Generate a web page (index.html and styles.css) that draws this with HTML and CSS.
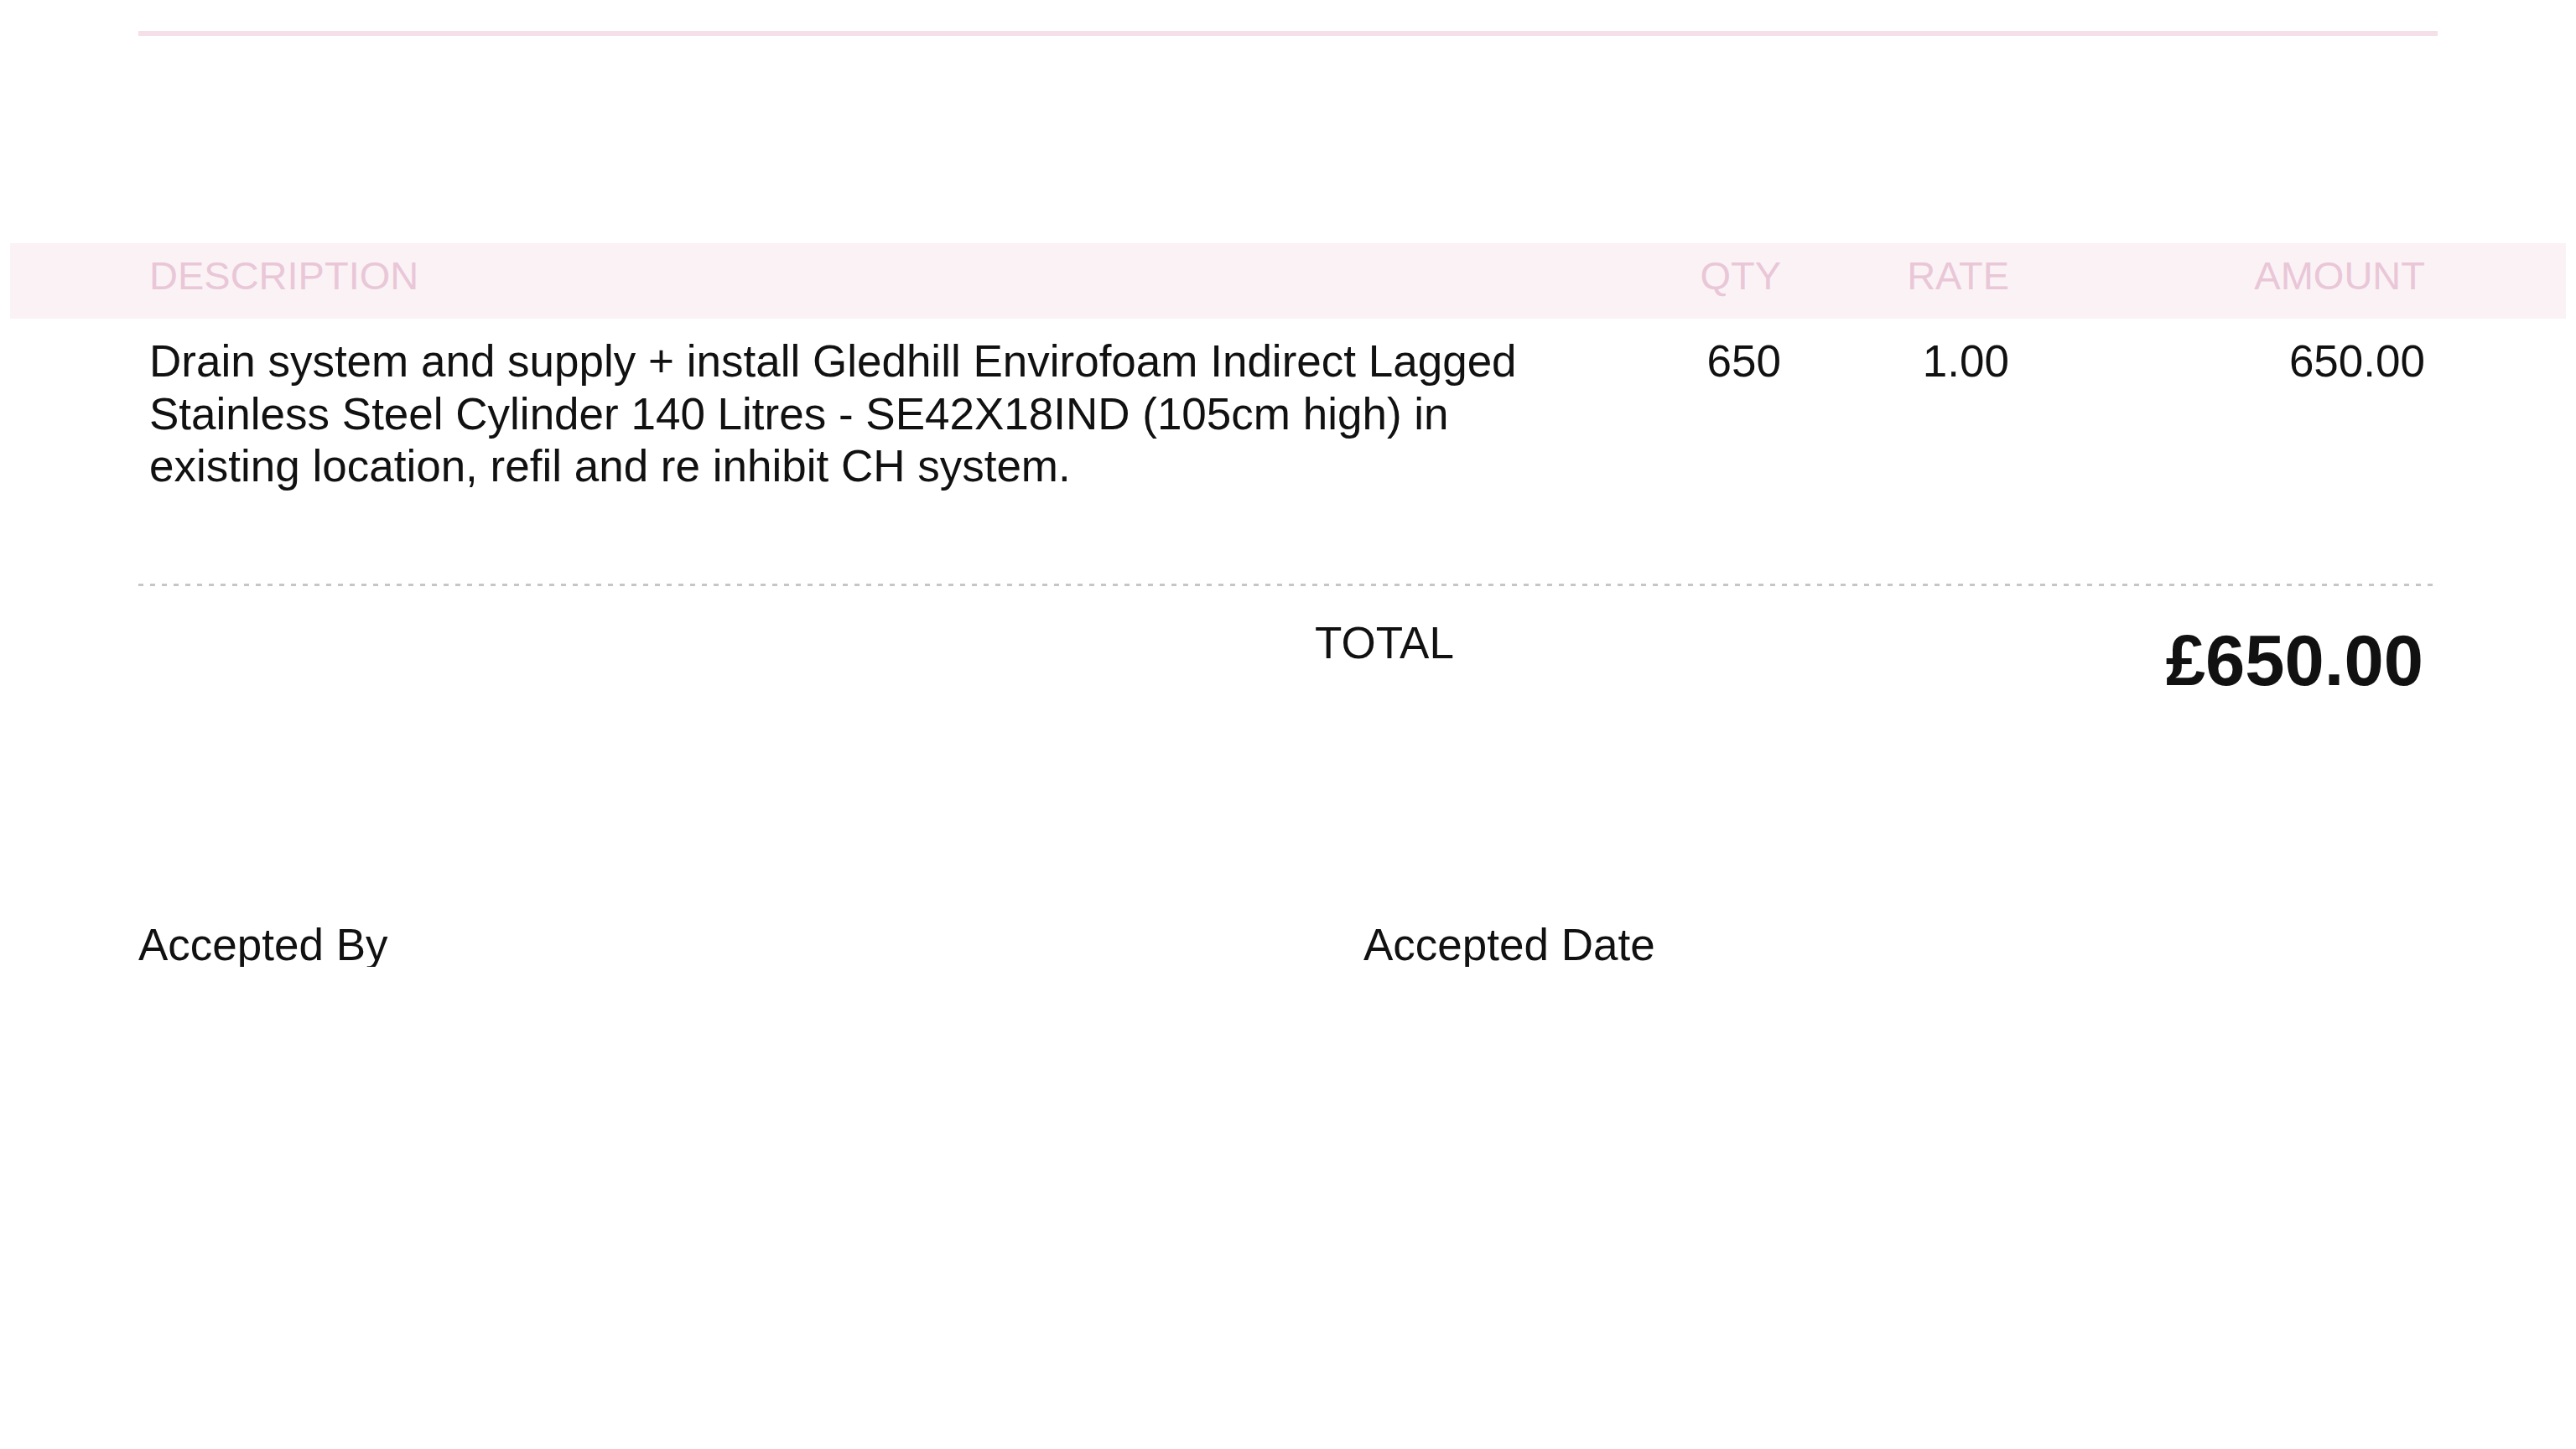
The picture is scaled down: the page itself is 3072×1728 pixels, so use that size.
FILE: index.html
```html
<!DOCTYPE html>
<html lang="en">
<head>
    <meta charset="UTF-8">
    <meta name="viewport" content="width=device-width, initial-scale=1.0">
    <title>Estimate</title>
    <link rel="stylesheet" href="styles.css">
</head>
<body>
    <div class="invoice">
        <div class="rule-top"></div>

        <div class="items">
            <div class="items-head">
                <div>DESCRIPTION</div>
                <div class="num">QTY</div>
                <div class="num">RATE</div>
                <div class="num">AMOUNT</div>
            </div>
            <div class="items-row">
                <div class="desc">Drain system and supply + install Gledhill Envirofoam Indirect Lagged Stainless Steel Cylinder 140 Litres - SE42X18IND (105cm high) in existing location, refil and re inhibit CH system.</div>
                <div class="num">650</div>
                <div class="num">1.00</div>
                <div class="num">650.00</div>
            </div>
        </div>

        <div class="rule-dotted"></div>

        <div class="total-row">
            <div class="total-label">TOTAL</div>
            <div class="total-amount">£650.00</div>
        </div>

        <div class="accept">
            <div>Accepted By</div>
            <div>Accepted Date</div>
        </div>
    </div>
</body>
</html>
```

FILE: styles.css
```css
body {
    margin: 0;
    background-color: #ffffff;
    color: #111111;
    font-family: "Liberation Sans", Arial, Helvetica, sans-serif;
}
.invoice {
    width: 2742px;
    margin: 0 auto;
}
.rule-top {
    margin-top: 37px;
    height: 6px;
    background-color: #f5dfe8;
}
.items {
    margin: 247px -153px 0;
}
.items-head,
.items-row {
    display: grid;
    grid-template-columns: 1700px 246px 272px 496px;
    padding: 0 166px;
}
.items-head {
    height: 90px;
    box-sizing: border-box;
    padding-top: 12px;
    background-color: #fbf2f6;
    color: #e9c7d7;
    font-size: 47px;
    line-height: 53px;
}
.items-row {
    padding-top: 20px;
    font-size: 53px;
    line-height: 62.5px;
}
.desc {
    padding-right: 40px;
}
.num {
    text-align: right;
}
.rule-dotted {
    margin: 108px 2px 0 0;
    height: 3px;
    background-image: repeating-linear-gradient(to right, #c6c6c6 0, #c6c6c6 6px, transparent 6px, transparent 14px);
}
.total-row {
    display: grid;
    grid-template-columns: auto 1fr;
    align-items: start;
    margin-top: 41px;
    padding: 0 17px 0 1403px;
}
.total-label {
    font-size: 53px;
    line-height: 1;
}
.total-amount {
    padding-top: 5px;
    text-align: right;
    font-size: 85px;
    font-weight: bold;
    line-height: 1;
}
.accept {
    display: grid;
    grid-template-columns: 1461px 1fr;
    margin-top: 270px;
    font-size: 53px;
    line-height: 1;
}
```
